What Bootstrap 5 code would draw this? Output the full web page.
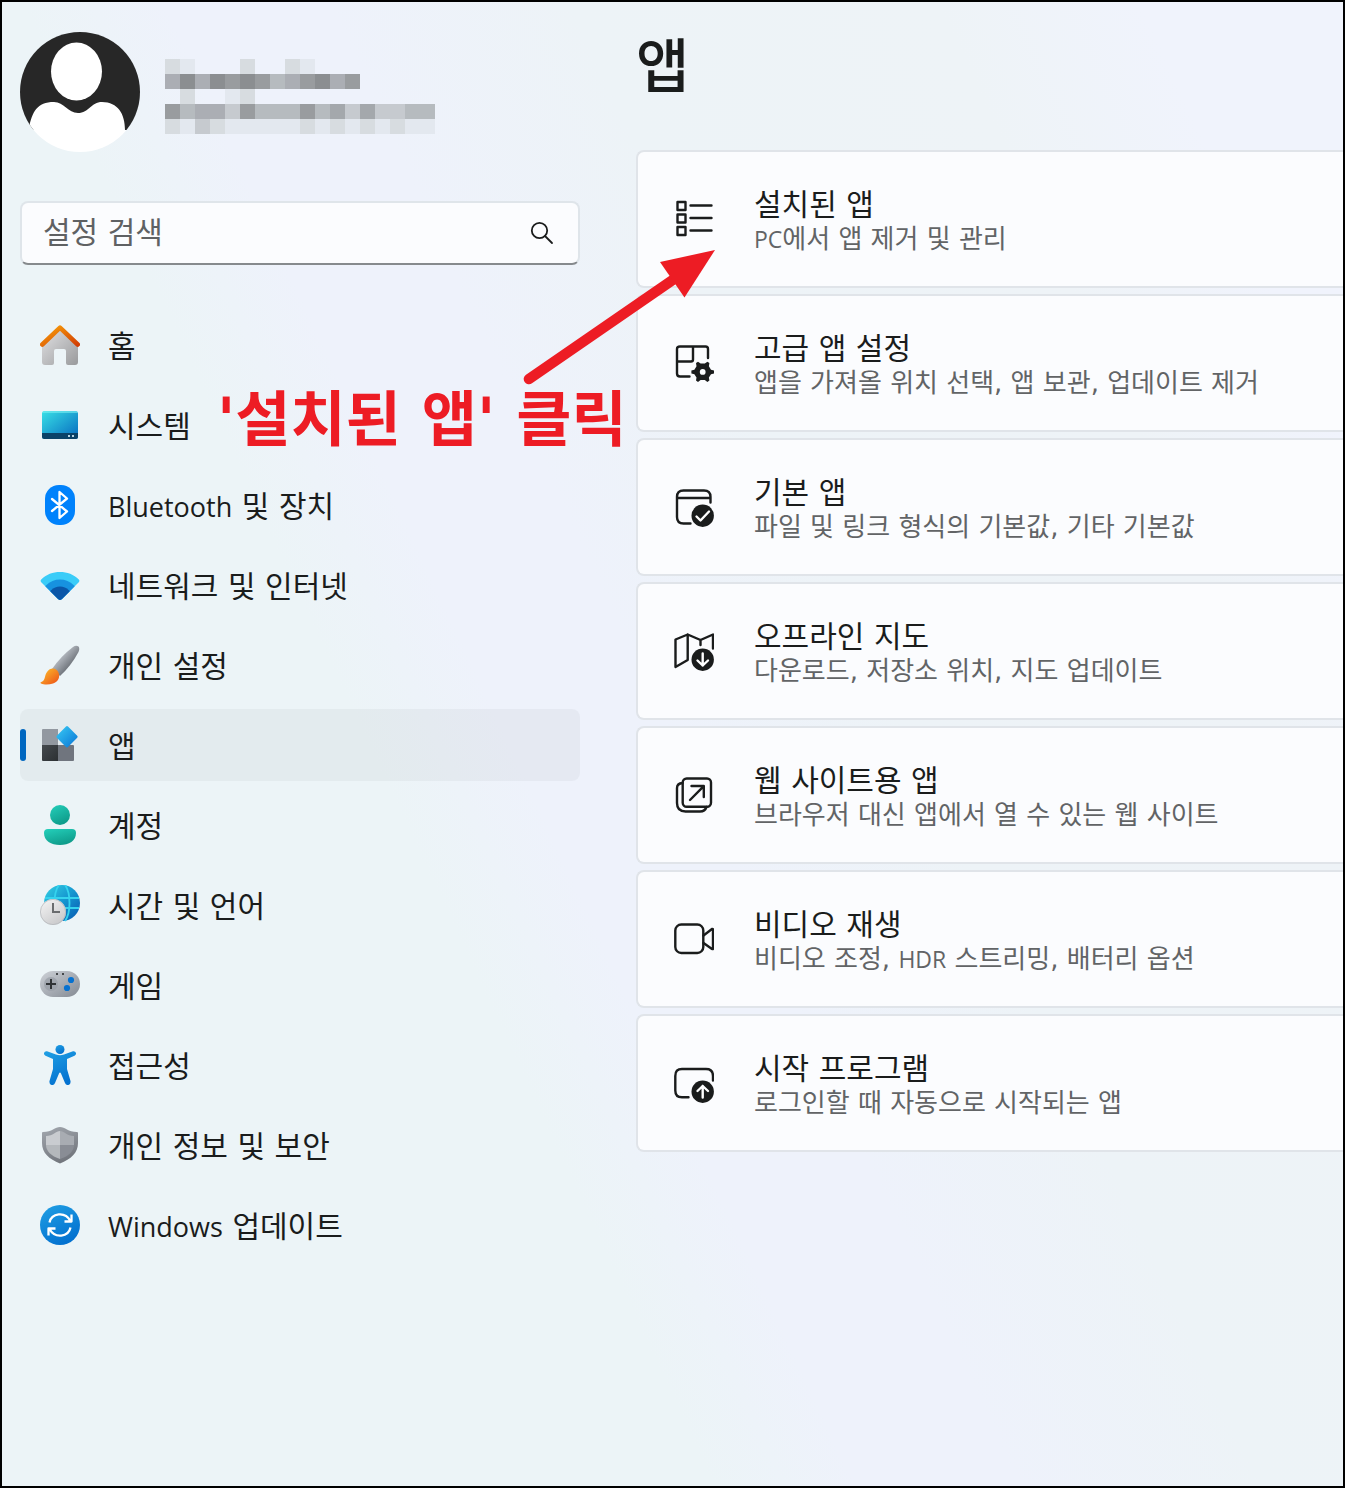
<!DOCTYPE html>
<html lang="ko">
<head>
<meta charset="utf-8">
<meta name="viewport" content="width=device-width, initial-scale=1">
<title>설정 - 앱</title>
<link href="https://cdn.jsdelivr.net/npm/bootstrap@5.3.0/dist/css/bootstrap.min.css" rel="stylesheet">
<style>
  body {
    font-family: "DejaVu Sans", "Noto Sans CJK KR", sans-serif;
    font-size: 30px;
    color: #1a1c1c;
    background: #edf3f8;
  }
  .latin { font-family: "Open Sans", sans-serif; font-size: 27px; }
  .small-latin { font-family: "Open Sans", sans-serif; font-size: 23px; }
  .window {
    border: 2px solid #000;
    padding: 30px 0 0 18px;
    gap: 56px;
    background: linear-gradient(65deg, #ecf4f7 0%, #ecf4f7 35%, #eef2fb 42%, #eef2fb 50%, #edf3f7 62%, #eef3f7 80%, #f0f3fc 90%);
  }
  .sidebar { width: 560px; }
  .profile { gap: 25px; }
  .avatar { width: 120px; height: 120px; }
  .masked-account { width: 270px; height: 75px; margin-top: 8px; }
  .search-box {
    height: 64px;
    margin-top: 49px;
    border: 2px solid #dfe5ea;
    border-bottom-color: #868a8d;
    border-radius: 8px;
    background: #fbfcfe;
    padding: 0 24px 0 21px;
  }
  .search-box .form-control {
    height: 60px;
    font-size: 30px;
    line-height: 60px;
    color: #1a1c1c;
  }
  .search-box .form-control::placeholder { color: #5f6163; opacity: 1; }
  .side-nav { margin-top: 44px; gap: 8px; }
  .side-nav .nav-link {
    height: 72px;
    padding: 0 20px;
    gap: 28px;
    line-height: 40px;
    color: #1a1c1c;
    border-radius: 8px;
  }
  .side-nav .nav-link > span { padding-top: 3px; }
  .side-nav .nav-link.active { background: rgba(0, 0, 0, .035); }
  .side-nav .nav-link.active::before {
    content: "";
    position: absolute;
    left: 0;
    width: 6px;
    height: 32px;
    border-radius: 3px;
    background: #0067c0;
  }
  .side-nav svg, .setting svg { width: 40px; height: 40px; }
  .page-title { font-size: 58px; font-weight: 500; line-height: 70px; margin-bottom: 48px; }
  .settings { gap: 6px; }
  .setting {
    height: 138px;
    padding: 0 36px;
    gap: 40px;
    border: 2px solid #e0e4e9;
    border-right: 0;
    border-radius: 8px 0 0 8px;
    background: #fbfcfe;
    color: #1a1c1c;
  }
  .setting > span { padding-top: 4px; }
  .setting-name { line-height: 36px; }
  .setting-info { font-size: 26px; line-height: 32px; color: #626466; }
  .line-icon { fill: none; stroke: #1a1c1c; stroke-width: 2.4; stroke-linecap: round; stroke-linejoin: round; }
  .callout-arrow { left: 520px; top: 244px; width: 200px; height: 144px; pointer-events: none; }
  .callout-text { left: 215px; top: 382px; font-size: 60px; line-height: 72px; color: #ed1c24; pointer-events: none; }
</style>
</head>
<body>
<div class="window d-flex min-vh-100 position-relative overflow-hidden">

  <aside class="sidebar flex-shrink-0">
    <div class="profile d-flex align-items-center">
      <svg class="avatar" viewBox="0 0 120 120" role="img" aria-label="프로필 사진">
        <defs><clipPath id="av"><circle cx="60" cy="60" r="60"/></clipPath></defs>
        <g clip-path="url(#av)">
          <rect width="120" height="98" fill="#272727"/>
          <ellipse cx="56.500" cy="39.500" rx="25.500" ry="29" fill="#fff"/>
          <path d="M9 96C12 80 17 70 34 70C44 70 48 81 58 81C69 81 71 70 82 70C98 70 105 82 105 98H120V120H0V96Z" fill="#fff"/>
        </g>
      </svg>
      <svg class="masked-account" viewBox="0 0 18 5" shape-rendering="crispEdges" role="img" aria-label="가려진 계정 정보">
        <path fill="#d7dce0" d="M0 0h1v1H0zM5 0h1v1H5zM8 0h1v1H8zM1 2h1v1H1zM5 2h1v1H5zM3 4h1v1H3zM9 4h1v1H9zM11 4h1v1h-1zM13 4h1v1h-1zM15 4h1v1h-1zM0 4h1v1H0z"/>
        <path fill="#dfe4eb" d="M1 0h1v1H1zM9 0h1v1H9zM4 2h1v1H4zM1 4h1v1H1zM4 4h4v1H4zM8 4h1v1H8zM10 4h1v1h-1zM12 4h1v1h-1zM14 4h1v1h-1zM16 4h2v1h-2z" opacity=".75"/>
        <path fill="#c6cacf" d="M2 4h1v1H2zM14 3h1v1h-1zM12 3h1v1h-1zM4 3h1v1H4zM15 3h1v1h-1z"/>
        <path fill="#abaeb4" d="M0 1h1v1H0zM2 1h1v1H2zM8 1h1v1H8zM11 1h1v1h-1zM2 3h2v1H2z"/>
        <path fill="#8b8e91" d="M1 1h1v1H1zM3 1h1v1H3zM5 1h1v1H5zM10 1h1v1h-1z"/>
        <path fill="#999c9f" d="M4 1h1v1H4zM6 1h1v1H6zM9 1h1v1H9zM12 1h1v1h-1zM0 3h1v1H0zM5 3h1v1H5zM9 3h1v1H9z"/>
        <path fill="#a4a8ac" d="M11 3h1v1h-1zM13 3h1v1h-1z"/>
        <path fill="#b6bbbf" d="M7 1h1v1H7zM1 3h1v1H1zM6 3h3v1H6zM10 3h1v1h-1zM16 3h2v1h-2z"/>
      </svg>
    </div>

    <form class="search-box d-flex align-items-center" role="search">
      <input id="q" type="text" class="form-control border-0 bg-transparent shadow-none p-0" placeholder="설정 검색">
      <label class="d-flex" for="q" aria-label="설정 검색">
        <svg width="24" height="24" viewBox="0 0 24 24" fill="none" stroke="#1a1c1c" stroke-width="1.800" stroke-linecap="round" aria-hidden="true"><circle cx="9.500" cy="9.500" r="7.700"/><path d="M15 15L22 22"/></svg>
      </label>
    </form>

    <nav class="side-nav nav flex-column flex-nowrap" aria-label="설정">
      <a class="nav-link d-flex align-items-center" href="#">
        <svg viewBox="0 0 40 40" aria-hidden="true">
          <defs><linearGradient id="h1" x2="1" y2="1"><stop stop-color="#e3e3e5"/><stop offset="1" stop-color="#999a9c"/></linearGradient><linearGradient id="h2" x2="1" y2="1"><stop stop-color="#f9a10a"/><stop offset="1" stop-color="#d23f04"/></linearGradient></defs>
          <path fill="url(#h1)" d="M2 19L20 3L38 19V37Q38 40 35 40H28Q26 40 26 38V26Q26 24 24 24H16Q14 24 14 26V38Q14 40 12 40H5Q2 40 2 37Z"/>
          <path d="M2.300 19.500L20 2.600L37.700 19.500" fill="none" stroke="url(#h2)" stroke-width="4.600" stroke-linecap="round" stroke-linejoin="round"/>
        </svg>
        <span>홈</span></a>
      <a class="nav-link d-flex align-items-center" href="#">
        <svg viewBox="0 0 40 40" aria-hidden="true">
          <defs><linearGradient id="s1" x2="1" y2="1"><stop stop-color="#38e0e6"/><stop offset="1" stop-color="#0669bf"/></linearGradient><clipPath id="sc"><rect x="2" y="6" width="36" height="28" rx="2.500"/></clipPath></defs>
          <g clip-path="url(#sc)"><rect x="2" y="6" width="36" height="28" fill="url(#s1)"/><path fill="#7cf0f2" opacity=".6" d="M2 6h36v2H2z"/><path fill="#0b4268" d="M2 28h36v6H2z"/><path fill="#b7d3e2" d="M28 30h2v2h-2zM32 30h2v2h-2z"/></g>
        </svg>
        <span>시스템</span></a>
      <a class="nav-link d-flex align-items-center" href="#">
        <svg viewBox="0 0 40 40" aria-hidden="true">
          <rect x="5" y="0" width="30" height="40" rx="14" fill="#0082fc"/>
          <path d="M12 14L27 26.500L19.500 33V7L27 13.500L12 26" fill="none" stroke="#fff" stroke-width="2.300" stroke-linejoin="round" stroke-linecap="round"/>
        </svg>
        <span><span class="latin">Bluetooth</span> 및 장치</span></a>
      <a class="nav-link d-flex align-items-center" href="#">
        <svg viewBox="0 0 40 40" aria-hidden="true">
          <defs><clipPath id="wf"><path d="M20 35Q19.200 35 18 34L1 17Q0 15.500 1.200 14.400C6 9.500 13 7 20 7S34 9.500 38.800 14.400Q40 15.500 39 17L22 34Q20.800 35 20 35Z"/></clipPath></defs>
          <g clip-path="url(#wf)"><rect width="40" height="40" fill="#3accf8"/><circle cx="20" cy="34" r="19.500" fill="#1792e0"/><circle cx="20" cy="34" r="12.500" fill="#0a56a8"/></g>
        </svg>
        <span>네트워크 및 인터넷</span></a>
      <a class="nav-link d-flex align-items-center" href="#">
        <svg viewBox="0 0 40 40" aria-hidden="true">
          <defs><linearGradient id="b1" x1=".3" y1=".3" x2=".7" y2=".7"><stop stop-color="#bcc1c8"/><stop offset="1" stop-color="#696e75"/></linearGradient><linearGradient id="b2" x2="1" y2="1"><stop stop-color="#fdc52c"/><stop offset="1" stop-color="#ec4d16"/></linearGradient></defs>
          <path fill="url(#b1)" d="M12 24Q21 11 33 2Q36 0 38.500 1.500Q40 3.500 38.500 7Q31 21 20 31Z"/>
          <path fill="url(#b2)" d="M7 27C10 22.500 15.500 22.500 18 26.500C21 32 18 37 13 38.500C9 39.800 4 39.800 1 38.500C0 38 .5 37.300 1.300 37C6 35 4 31 7 27Z"/>
        </svg>
        <span>개인 설정</span></a>
      <a class="nav-link active position-relative d-flex align-items-center" href="#" aria-current="page">
        <svg viewBox="0 0 40 40" aria-hidden="true">
          <defs><linearGradient id="a1" x2="1" y2="1"><stop stop-color="#44494d"/><stop offset="1" stop-color="#2c3033"/></linearGradient><linearGradient id="a2" y2="1"><stop stop-color="#3accf5"/><stop offset="1" stop-color="#0873d4"/></linearGradient></defs>
          <path fill="#9298a0" d="M3 4H18V20H2V5Q2 4 3 4Z"/><path fill="url(#a1)" d="M2 20H18V36H3Q2 36 2 35Z"/><path fill="#70757e" d="M18 20H33Q34 20 34 21V35Q34 36 33 36H18Z"/>
          <path fill="url(#a2)" d="M26 1.500Q27 .5 28 1.500L37.200 10.700Q38.200 11.700 37.200 12.700L28 21.900Q27 22.900 26 21.900L16.800 12.700Q15.800 11.700 16.800 10.700Z"/>
        </svg>
        <span>앱</span></a>
      <a class="nav-link d-flex align-items-center" href="#">
        <svg viewBox="0 0 40 40" aria-hidden="true">
          <defs><linearGradient id="c1" x2=".5" y2="1"><stop stop-color="#24d0bb"/><stop offset="1" stop-color="#0f9c8b"/></linearGradient></defs>
          <circle cx="20" cy="10" r="10" fill="url(#c1)"/><path fill="url(#c1)" d="M8 24H32Q36 24 36 28C36 36 29 40 20 40S4 36 4 28Q4 24 8 24Z"/>
        </svg>
        <span>계정</span></a>
      <a class="nav-link d-flex align-items-center" href="#">
        <svg viewBox="0 0 40 40" aria-hidden="true">
          <defs><linearGradient id="t1" x2="1" y2="1"><stop stop-color="#35d2e4"/><stop offset=".5" stop-color="#1596d0"/><stop offset="1" stop-color="#0757b0"/></linearGradient><linearGradient id="t2" x2=".7" y2="1"><stop stop-color="#f6f6f6"/><stop offset="1" stop-color="#c9c9cb"/></linearGradient></defs>
          <circle cx="22" cy="18" r="18" fill="url(#t1)"/>
          <path d="M5 13H39M5 23H39M19 0C13 8 13 28 19 36M25 0C31 8 31 28 25 36" fill="none" stroke="#35d3ee" stroke-width="1.800"/>
          <circle cx="13" cy="27" r="13" fill="url(#t2)"/><circle cx="13" cy="27" r="12.600" fill="none" stroke="#b2b6ba" stroke-width=".7"/>
          <path d="M13 18V27H20" fill="none" stroke="#6a6c6e" stroke-width="2"/>
        </svg>
        <span>시간 및 언어</span></a>
      <a class="nav-link d-flex align-items-center" href="#">
        <svg viewBox="0 0 40 40" aria-hidden="true">
          <defs><linearGradient id="g1" x2="1" y2="1"><stop stop-color="#cdd1d7"/><stop offset="1" stop-color="#848a93"/></linearGradient></defs>
          <rect y="6" width="40" height="26" rx="13" fill="url(#g1)"/><circle cx="11" cy="19" r="7" fill="#979da5" opacity=".7"/>
          <path d="M11 14V24M6 19H16" stroke="#303336" stroke-width="2"/><path fill="#45484b" d="M16 8h2v2h-2zM22 8h2v2h-2z"/>
          <circle cx="31" cy="15" r="3.100" fill="#0671d0"/><circle cx="27" cy="23" r="3.100" fill="#0671d0"/>
        </svg>
        <span>게임</span></a>
      <a class="nav-link d-flex align-items-center" href="#">
        <svg viewBox="0 0 40 40" aria-hidden="true">
          <defs><linearGradient id="x1" x2=".5" y2="1"><stop stop-color="#20a0e4"/><stop offset="1" stop-color="#0472d0"/></linearGradient></defs>
          <circle cx="20" cy="4.500" r="4.500" fill="url(#x1)"/>
          <path fill="url(#x1)" d="M7 6.200L16 9.500Q20 11 24 9.500L33 6.200Q35.300 5.800 36 8Q36.300 10 34.500 10.800L27 14V24L30.500 36Q31 39 28.500 40Q26 40.300 25 38L21 28.500Q20 26.500 19 28.500L15 38Q14 40.300 11.500 40Q9 39 9.500 36L13 24V14L5.500 10.800Q3.700 10 4 8Q4.700 5.800 7 6.200Z"/>
        </svg>
        <span>접근성</span></a>
      <a class="nav-link d-flex align-items-center" href="#">
        <svg viewBox="0 0 40 40" aria-hidden="true">
          <defs><linearGradient id="d1" x2=".4" y2="1"><stop stop-color="#a3a8af"/><stop offset="1" stop-color="#73777e"/></linearGradient></defs>
          <path fill="url(#d1)" d="M20 2C25 2 28 7 37 7Q38 7 38 8V18C38 28 31 34 20 38.500C9 34 2 28 2 18V8Q2 7 3 7C12 7 15 2 20 2Z"/>
          <path fill="#c9ccd0" d="M20 6V20H6V11C13 11 16 6 20 6Z"/><path fill="#a8acb2" d="M20 6V20H34V11C27 11 24 6 20 6Z"/><path fill="#b4b8bc" d="M6 20H20V34C11 31 6 26 6 20Z"/><path fill="#898d95" d="M34 20H20V34C29 31 34 26 34 20Z"/>
        </svg>
        <span>개인 정보 및 보안</span></a>
      <a class="nav-link d-flex align-items-center" href="#">
        <svg viewBox="0 0 40 40" aria-hidden="true">
          <circle cx="20" cy="20" r="20" fill="url(#x1)"/>
          <path d="M9.500 17.500C11.500 8 25 6 30.500 16M31.500 9.500V16.500H24.500M30.500 22.500C28.500 32 15 34 9.500 24M8.500 30.500V23.500H15.500" fill="none" stroke="#fff" stroke-width="2.300" stroke-linejoin="round"/>
        </svg>
        <span><span class="latin">Windows</span> 업데이트</span></a>
    </nav>
  </aside>

  <main class="flex-grow-1">
    <h1 class="page-title">앱</h1>
    <div class="settings d-flex flex-column">
      <a class="setting d-flex align-items-center text-decoration-none" href="#">
        <svg class="line-icon" viewBox="0 0 40 40" aria-hidden="true"><path d="M3.500 3h8v8h-8zM3.500 15.500h8v8h-8zM3.500 28h8v8h-8zM16.500 6.500H37.500M16.500 19H37.500M16.500 31.500H37.500"/></svg>
        <span><span class="setting-name d-block">설치된 앱</span><span class="setting-info d-block"><span class="small-latin">PC</span>에서 앱 제거 및 관리</span></span></a>
      <a class="setting d-flex align-items-center text-decoration-none" href="#">
        <svg class="line-icon" viewBox="0 0 40 40" aria-hidden="true"><path d="M34 15V6Q34 3.500 31.500 3.500H6Q3 3.500 3 6V30.500Q3 33.500 6 33.500H15.500M19 3.500V16.500Q19 18.500 17 18.500H3"/>
          <path fill="#1a1c1c" stroke="none" fill-rule="evenodd" d="M24 18.800L26.600 20.600H30.800L33.400 18.800L35.400 20L34.900 23.300L37 26.800L40 27.500V30.500L37 31.200L34.900 34.500L35.400 37.600L33.400 39L30.800 37H26.600L24 39L22 37.600L22.500 34.500L20.400 31.200L17.400 30.500V27.500L20.400 26.800L22.500 23.300L22 20ZM28.700 26A2.900 2.900 0 1 0 28.700 31.800A2.900 2.900 0 1 0 28.700 26Z"/></svg>
        <span><span class="setting-name d-block">고급 앱 설정</span><span class="setting-info d-block">앱을 가져올 위치 선택, 앱 보관, 업데이트 제거</span></span></a>
      <a class="setting d-flex align-items-center text-decoration-none" href="#">
        <svg class="line-icon" viewBox="0 0 40 40" aria-hidden="true"><path d="M36.500 15.500V10Q36.500 3.500 30 3.500H9.500Q3 3.500 3 10V30Q3 36.500 9.500 36.500H16.500M3 11H36.500"/><circle cx="28.700" cy="28.700" r="11.200" fill="#1a1c1c" stroke="none"/><path stroke="#fff" d="M22.500 29.500L26.500 33.500L35 24.500"/></svg>
        <span><span class="setting-name d-block">기본 앱</span><span class="setting-info d-block">파일 및 링크 형식의 기본값, 기타 기본값</span></span></a>
      <a class="setting d-flex align-items-center text-decoration-none" href="#">
        <svg class="line-icon" viewBox="0 0 40 40" aria-hidden="true"><path d="M1.500 8.500L13.700 3.500V29L1.500 36ZM13.700 3.500L26.500 9V14M26.500 9L39 3.500V17.500"/><circle cx="28.700" cy="28.700" r="11.200" fill="#1a1c1c" stroke="none"/><path stroke="#fff" d="M28.700 22.500V34.500M23.500 29.500L28.700 34.500L34 29.500"/></svg>
        <span><span class="setting-name d-block">오프라인 지도</span><span class="setting-info d-block">다운로드, 저장소 위치, 지도 업데이트</span></span></a>
      <a class="setting d-flex align-items-center text-decoration-none" href="#">
        <svg class="line-icon" viewBox="0 0 40 40" aria-hidden="true"><rect x="8.700" y="3.500" width="28.300" height="28.300" rx="4"/><path d="M8.500 8Q3 8.500 3 13V28Q3 36.500 11.500 36.500H26Q31 36.500 32.500 32M16 25L29.500 11.300M17.500 11H29.800V22"/></svg>
        <span><span class="setting-name d-block">웹 사이트용 앱</span><span class="setting-info d-block">브라우저 대신 앱에서 열 수 있는 웹 사이트</span></span></a>
      <a class="setting d-flex align-items-center text-decoration-none" href="#">
        <svg class="line-icon" viewBox="0 0 40 40" aria-hidden="true"><rect x="1.300" y="5.500" width="28" height="28.500" rx="6"/><path d="M29.500 16.500L38 10Q39 9.700 39 10.500V29.500Q39 30.500 38 30L29.500 24"/></svg>
        <span><span class="setting-name d-block">비디오 재생</span><span class="setting-info d-block">비디오 조정, <span class="small-latin">HDR</span> 스트리밍, 배터리 옵션</span></span></a>
      <a class="setting d-flex align-items-center text-decoration-none" href="#">
        <svg class="line-icon" viewBox="0 0 40 40" aria-hidden="true"><path d="M39 17.500V13Q39 6 32 6H8Q1.300 6 1.300 13V27.500Q1.300 34.300 8 34.300H14.500"/><circle cx="28.700" cy="28.700" r="11.200" fill="#1a1c1c" stroke="none"/><path stroke="#fff" d="M28.700 34.500V23M23.500 28L28.700 23L34 28"/></svg>
        <span><span class="setting-name d-block">시작 프로그램</span><span class="setting-info d-block">로그인할 때 자동으로 시작되는 앱</span></span></a>
    </div>
  </main>

  <svg class="callout-arrow position-absolute" viewBox="0 0 200 144" fill="#ed1c24" aria-hidden="true">
    <path d="M7 133L155 31" stroke="#ed1c24" stroke-width="10.600" stroke-linecap="round"/>
    <path d="M193 4L138 16L162.500 51.500Z"/>
  </svg>
  <div class="callout-text position-absolute fw-bold text-nowrap">'설치된 앱' 클릭</div>
</div>
<script src="https://cdn.jsdelivr.net/npm/bootstrap@5.3.0/dist/js/bootstrap.bundle.min.js"></script>
</body>
</html>
